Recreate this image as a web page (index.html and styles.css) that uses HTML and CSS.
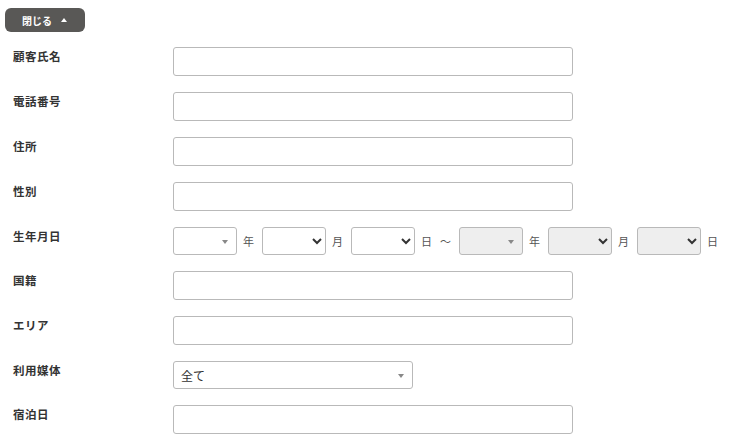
FILE: index.html
```html
<!DOCTYPE html>
<html lang="ja">
<head>
<meta charset="utf-8">
<link rel="stylesheet" href="styles.css">
</head>
<body>
<div class="page">
  <button class="toggle" type="button">閉じる <span class="tri"></span></button>
  <form class="form">
    <div class="row"><label class="lbl">顧客氏名</label><input class="txt" type="text"></div>
    <div class="row"><label class="lbl">電話番号</label><input class="txt" type="text"></div>
    <div class="row"><label class="lbl">住所</label><input class="txt" type="text"></div>
    <div class="row"><label class="lbl">性別</label><input class="txt" type="text"></div>
    <div class="row"><label class="lbl">生年月日</label>
      <div class="dates">
        <span class="s2 small"><span class="arrow"></span></span><span class="unit">年</span>
        <select class="nat"><option></option></select><span class="unit">月</span>
        <select class="nat"><option></option></select><span class="unit">日</span>
        <span class="unit tilde">〜</span>
        <span class="s2 small dis"><span class="arrow"></span></span><span class="unit">年</span>
        <select class="nat dis" disabled><option></option></select><span class="unit">月</span>
        <select class="nat dis" disabled><option></option></select><span class="unit">日</span>
      </div>
    </div>
    <div class="row"><label class="lbl">国籍</label><input class="txt" type="text"></div>
    <div class="row"><label class="lbl">エリア</label><input class="txt" type="text"></div>
    <div class="row"><label class="lbl">利用媒体</label><span class="s2 wide"><span class="val">全て</span><span class="arrow"></span></span></div>
    <div class="row"><label class="lbl">宿泊日</label><input class="txt" type="text"></div>
  </form>
</div>
</body>
</html>
```
FILE: styles.css
```css
* { box-sizing: border-box; }
body {
  margin: 0;
  background: #fff;
  font-family: "Noto Sans CJK JP", "Noto Sans", sans-serif;
  color: #333;
}
.page { padding: 8px 0 0 5px; }
.toggle {
  display: flex;
  align-items: center;
  gap: 9px;
  width: 80px;
  height: 24px;
  padding: 0 0 0 17px;
  border: none;
  border-radius: 6px;
  background: #595856;
  color: #fff;
  font-family: inherit;
  font-size: 10px;
  font-weight: bold;
}
.tri {
  width: 0; height: 0;
  border-left: 3.5px solid transparent;
  border-right: 3.5px solid transparent;
  border-bottom: 4px solid #fff;
}
.form { margin-top: 15px; padding-left: 8px; }
.row {
  display: flex;
  align-items: flex-start;
  margin-bottom: 16px;
}
.lbl {
  width: 160px;
  flex: none;
  font-size: 11.5px;
  font-weight: bold;
  line-height: 16px;
  padding-top: 1px;
  color: #333;
  letter-spacing: 0.5px;
}
.txt {
  width: 400px;
  height: 29px;
  border: 1px solid #b9b9b9;
  border-radius: 3px;
  background: #fff;
  margin: 0;
}
.dates { display: flex; align-items: center; height: 28px; }
.s2 {
  position: relative;
  display: flex;
  align-items: center;
  height: 28px;
  border: 1px solid #b9b9b9;
  border-radius: 3px;
  background: #fff;
  font-size: 12px;
  color: #333;
}
.s2.small { width: 64px; }
.s2.wide { width: 240px; padding-left: 7px; }
.s2.dis { background: #eee; }
.arrow {
  position: absolute;
  right: 8px;
  top: 12px;
  width: 0; height: 0;
  border-left: 3px solid transparent;
  border-right: 3px solid transparent;
  border-top: 4px solid #888;
}
.nat {
  width: 64px;
  height: 28px;
  border: 1px solid #b9b9b9;
  border-radius: 3px;
  background: #fff;
  margin: 0;
  font-size: 12px;
  color: #333;
}
.nat.dis { background: #eee; opacity: 1; color: #333; }
.unit {
  font-size: 11px;
  color: #555;
  margin: 0 8px 0 6px;
}
.tilde { margin: 0 8px 0 0; }
```
